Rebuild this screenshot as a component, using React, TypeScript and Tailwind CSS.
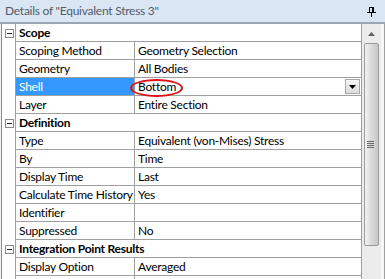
import React from "react";

type Row =
  | { kind: "header"; label: string }
  | { kind: "item"; label: string; value: string; selected?: boolean; dropdown?: boolean; circled?: boolean };

const rows: Row[] = [
  { kind: "header", label: "Scope" },
  { kind: "item", label: "Scoping Method", value: "Geometry Selection" },
  { kind: "item", label: "Geometry", value: "All Bodies" },
  { kind: "item", label: "Shell", value: "Bottom", selected: true, dropdown: true, circled: true },
  { kind: "item", label: "Layer", value: "Entire Section" },
  { kind: "header", label: "Definition" },
  { kind: "item", label: "Type", value: "Equivalent (von-Mises) Stress" },
  { kind: "item", label: "By", value: "Time" },
  { kind: "item", label: "Display Time", value: "Last" },
  { kind: "item", label: "Calculate Time History", value: "Yes" },
  { kind: "item", label: "Identifier", value: "" },
  { kind: "item", label: "Suppressed", value: "No" },
  { kind: "header", label: "Integration Point Results" },
  { kind: "item", label: "Display Option", value: "Averaged" },
  { kind: "item", label: "", value: "" },
];

function MinusBox() {
  return (
    <div className="w-[9px] h-[9px] border border-[#8a8a8a] bg-white flex items-center justify-center">
      <div className="w-[5px] h-[1px] bg-[#222]" />
    </div>
  );
}

export default function App() {
  return (
    <div
      className="w-[385px] h-[279px] overflow-hidden bg-white text-[12px] tracking-[-0.25px] text-black flex flex-col"
      style={{ fontFamily: 'Lato, "Noto Sans", sans-serif' }}
    >
      {/* Title bar */}
      <div className="h-[24px] shrink-0 bg-[#dbe6f4] border-b-2 border-[#9aa6b4] flex items-center justify-between pl-[5px] pr-[9px]">
        <span className="text-[#4f5d6d] leading-none">Details of "Equivalent Stress 3"</span>
        <svg width="9" height="10" viewBox="0 0 9 10" className="mt-[1px]">
          <rect x="2.5" y="0.5" width="4" height="5" fill="none" stroke="#000" strokeWidth="1" />
          <rect x="5" y="1" width="1" height="4" fill="#000" />
          <rect x="0" y="5" width="9" height="1" fill="#000" />
          <rect x="4" y="6" width="1" height="4" fill="#000" />
        </svg>
      </div>

      {/* Body */}
      <div className="flex flex-1 min-h-0 bg-[#eef2f7]">
        <div className="w-[361px] shrink-0 ml-[1px] border-l border-[#8c8c8c] bg-white flex flex-col overflow-hidden">
          {rows.map((r, i) =>
            r.kind === "header" ? (
              <div key={i} className="flex h-[18px] shrink-0">
                <div className="w-[13px] shrink-0 flex items-center justify-center pl-[1px]">
                  <MinusBox />
                </div>
                <div className="flex-1 border-l border-b border-r border-[#a0a0a0] pl-[3px] flex items-center font-bold leading-none">
                  {r.label}
                </div>
              </div>
            ) : (
              <div key={i} className="flex h-[18px] shrink-0">
                <div className="w-[13px] shrink-0" />
                <div className="flex-1 flex border-l border-b border-r border-[#a0a0a0]">
                  <div
                    className={
                      "w-[119px] shrink-0 border-r border-[#a0a0a0] pl-[3px] flex items-center leading-none whitespace-nowrap " +
                      (r.selected ? "bg-[#3399ff] text-white" : "")
                    }
                  >
                    {r.label}
                  </div>
                  <div className="relative flex-1 pl-[3px] flex items-center leading-none whitespace-nowrap">
                    <span className="relative">
                      {r.value}
                      {r.circled && (
                        <span className="absolute left-[-8px] top-[-2px] w-[53px] h-[18px] rounded-[50%] border-2 border-[#e0101a]" />
                      )}
                    </span>
                    {r.dropdown && (
                      <div className="absolute right-[1px] top-[1px] w-[15px] h-[15px] border border-[#a8a8a8] bg-gradient-to-b from-[#f6f6f6] to-[#dcdcdc] flex items-center justify-center">
                        <svg width="7" height="4" viewBox="0 0 7 4">
                          <path d="M0 0 H7 L3.5 4 Z" fill="#000" />
                        </svg>
                      </div>
                    )}
                  </div>
                </div>
              </div>
            )
          )}
        </div>

        {/* Scrollbar */}
        <div className="w-[19px] shrink-0 bg-[#ececec] flex flex-col items-center">
          <div className="h-[19px] w-full flex items-center justify-center">
            <svg width="7" height="4" viewBox="0 0 7 4">
              <path d="M3.5 0 L7 4 H0 Z" fill="#606060" />
            </svg>
          </div>
          <div className="w-[15px] h-[203px] border border-[#9c9c9c] rounded-[2px] bg-gradient-to-r from-[#f2f2f2] via-[#dadada] to-[#c8c8c8] flex flex-col items-center justify-center gap-[1px] pr-[2px]">
            <div className="w-[7px] h-[1px] bg-[#6a6a6a]" />
            <div className="w-[7px] h-[1px] bg-[#6a6a6a]" />
            <div className="w-[7px] h-[1px] bg-[#6a6a6a]" />
            <div className="w-[7px] h-[1px] bg-[#6a6a6a]" />
          </div>
        </div>
        <div className="flex-1 bg-[#f4f6f9] border-r border-[#a0a0a0]" />
      </div>
    </div>
  );
}
